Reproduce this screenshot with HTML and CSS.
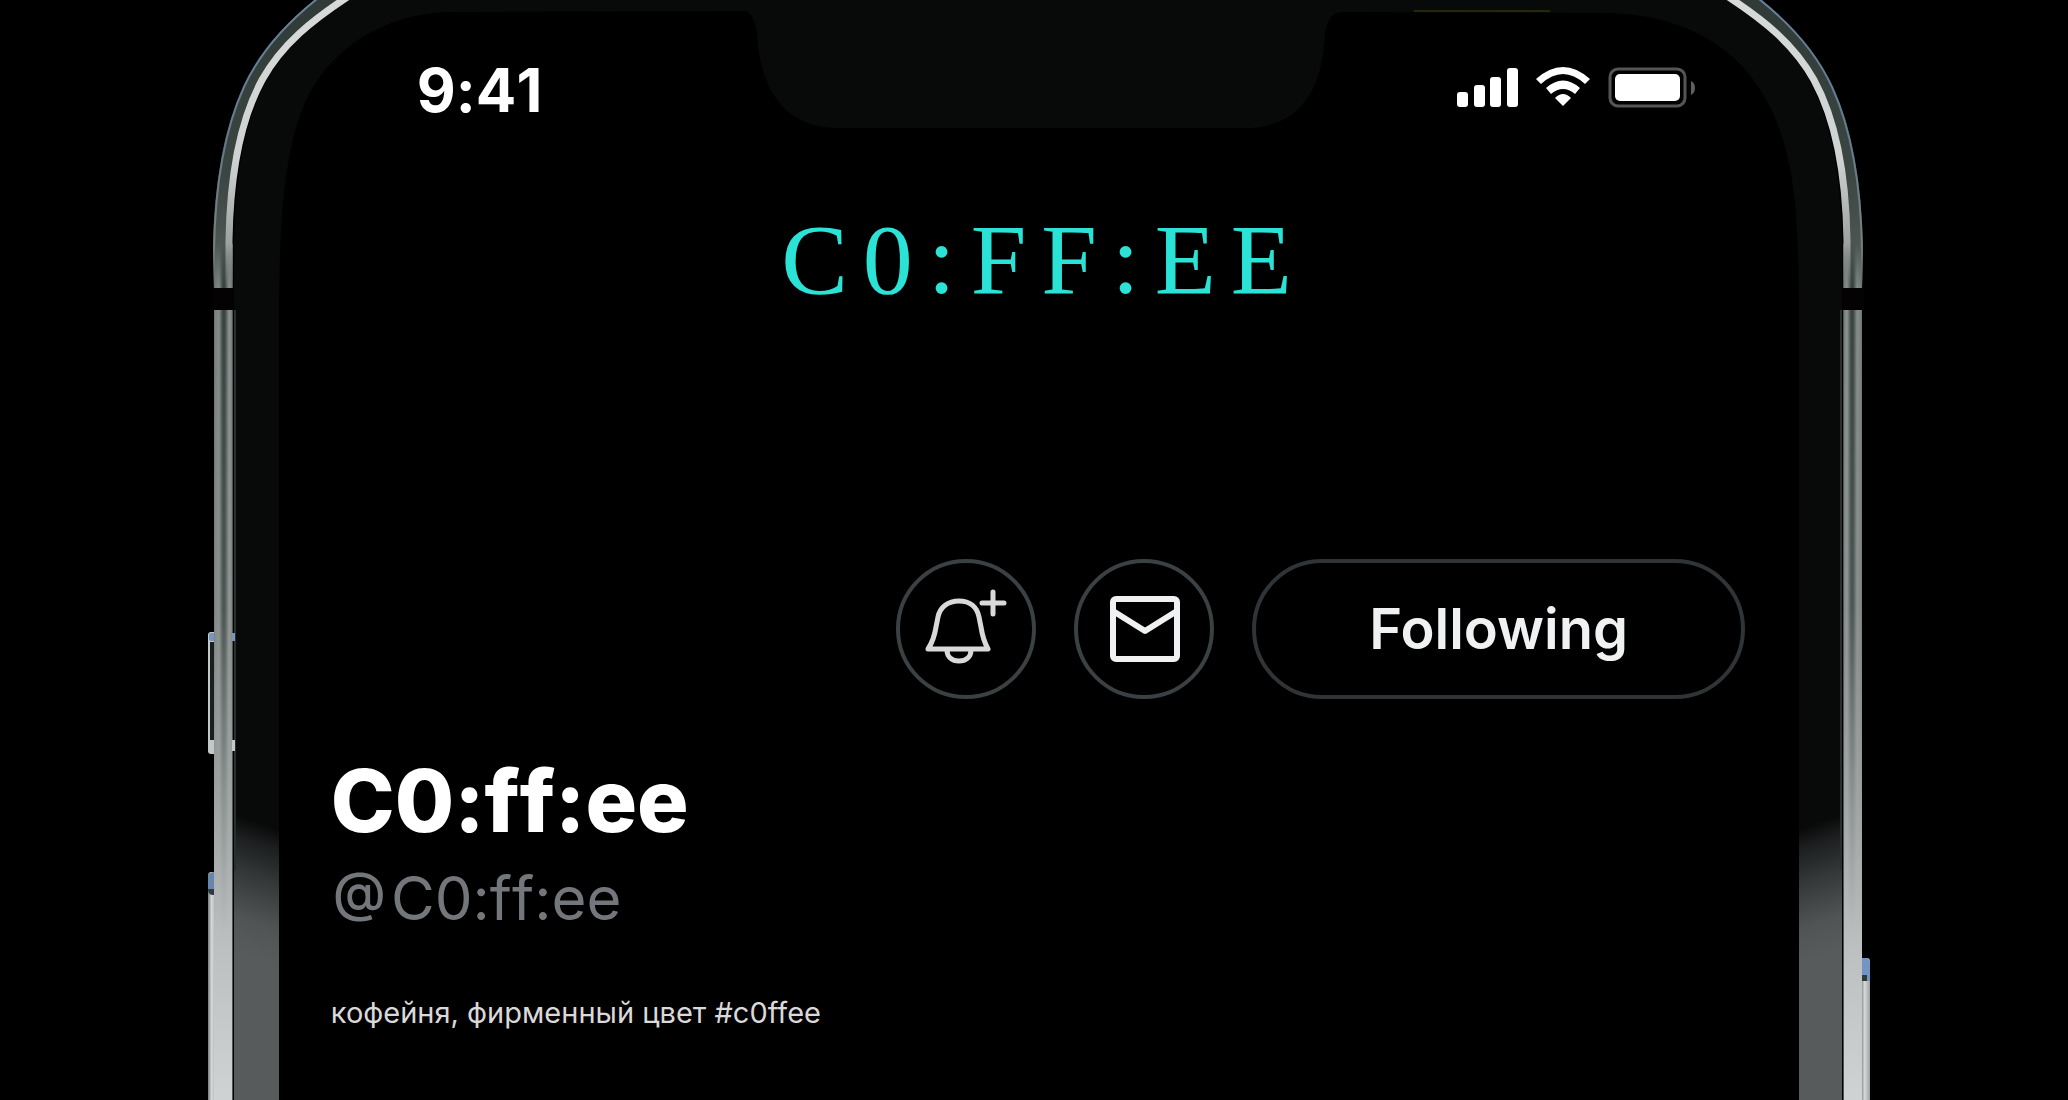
FILE: index.html
```html
<!DOCTYPE html>
<html lang="ru">
<head>
<meta charset="utf-8">
<title>C0:ff:ee</title>
<link rel="stylesheet" href="styles.css">
</head>
<body>
<div class="stage">
  <svg class="phone" viewBox="0 0 2068 1100" preserveAspectRatio="xMidYMin slice" aria-hidden="true">
    <defs>
      <linearGradient id="railSide" x1="213" y1="0" x2="233" y2="0" gradientUnits="userSpaceOnUse">
        <stop offset="0" stop-color="#4a514f"/><stop offset=".1" stop-color="#78807e"/><stop offset=".3" stop-color="#848c8a"/><stop offset=".5" stop-color="#363f3c"/><stop offset=".6" stop-color="#3b4441"/><stop offset=".8" stop-color="#8b9392"/><stop offset=".92" stop-color="#7c8483"/><stop offset="1" stop-color="#39403f"/>
      </linearGradient>
      <linearGradient id="railFade" x1="0" y1="280" x2="0" y2="1100" gradientUnits="userSpaceOnUse">
        <stop offset="0" stop-color="#a5a9a9" stop-opacity="0"/><stop offset=".4" stop-color="#a5a9a9" stop-opacity=".2"/><stop offset=".63" stop-color="#a9adad" stop-opacity=".75"/><stop offset=".8" stop-color="#babebe" stop-opacity="1"/><stop offset="1" stop-color="#d0d3d4"/>
      </linearGradient>
      <linearGradient id="railCurve" x1="0" y1="0" x2="0" y2="290" gradientUnits="userSpaceOnUse">
        <stop offset="0" stop-color="#303a36"/><stop offset=".6" stop-color="#3b4541"/><stop offset=".84" stop-color="#4c5552"/><stop offset="1" stop-color="#4c5552" stop-opacity="0"/>
      </linearGradient>
      <linearGradient id="shine" x1="0" y1="0" x2="0" y2="290" gradientUnits="userSpaceOnUse">
        <stop offset="0" stop-color="#d8dada"/><stop offset=".55" stop-color="#cfd2d2"/><stop offset=".84" stop-color="#9ba2a1"/><stop offset="1" stop-color="#8b9392" stop-opacity="0"/>
      </linearGradient>
      <linearGradient id="edge" x1="0" y1="0" x2="0" y2="290" gradientUnits="userSpaceOnUse">
        <stop offset="0" stop-color="#66809b"/><stop offset=".5" stop-color="#62798c"/><stop offset=".84" stop-color="#78807e"/><stop offset="1" stop-color="#78807e" stop-opacity="0"/>
      </linearGradient>
      <linearGradient id="bezel" x1="256" y1="822" x2="215" y2="942" gradientUnits="userSpaceOnUse">
        <stop offset="0" stop-color="#080a0a"/><stop offset=".15" stop-color="#1c1e1f"/><stop offset=".4" stop-color="#333738"/><stop offset=".75" stop-color="#505454"/><stop offset="1" stop-color="#575b5b"/>
      </linearGradient>
      <linearGradient id="key" x1="0" y1="0" x2="1" y2="0">
        <stop offset="0" stop-color="#767c7b"/><stop offset=".4" stop-color="#d8dada"/><stop offset="1" stop-color="#9da1a1"/>
      </linearGradient>
      <g id="half">
        <path fill="url(#bezel)" d="M234 1100V240C236 180 242 128 266 82C286 44 316 18 356 -6H1038V1100Z"/>
        <rect x="214" y="244" width="19" height="856" fill="url(#railSide)"/>
        <path fill="url(#railCurve)" d="M213 290V250C214 190 222 133 243 87C259 52 285 22 325 -8H352C308 20 284 46 266 78C240 124 233 180 232 240V290Z"/>
        <path fill="none" stroke="url(#edge)" stroke-width="2" d="M214 290V250C215 190 223 133 244 87C260 52 286 22 326 -8"/>
        <path fill="none" stroke="url(#shine)" stroke-width="7" d="M229 290V240C230 180 238 124 262 80C282 44 312 20 352 -6"/>
        <rect x="214" y="280" width="18" height="820" fill="url(#railFade)"/>
        <rect x="234" y="310" width="2" height="560" fill="#2a302f"/>
        <path fill="#050203" d="M212 288H233V310H212Z"/>
      </g>
    </defs>
    <rect x="208" y="632" width="9" height="122" rx="3" fill="#c5c8c8"/>
    <rect x="210" y="642" width="7" height="98" fill="#17201d"/>
    <rect x="209" y="633" width="8" height="8" rx="2" fill="#7896bd"/>
    <rect x="208" y="872" width="9" height="240" rx="3" fill="url(#key)"/>
    <path d="M208 892V878Q208 872 214 872V895Q208 895 208 892Z" fill="#6686ad"/>
    <path d="M208 889L214 889V895Q208 895 208 889Z" fill="#2f3b36"/>
    <rect x="1861" y="958" width="9" height="150" rx="3" fill="url(#key)"/>
    <path d="M1862 958H1866Q1870 958 1870 966V981H1862Z" fill="#7095c6"/>
    <path d="M1862 975H1867V981H1862Z" fill="#2f3b36"/>
    <use href="#half"/>
    <use href="#half" transform="translate(2076 0) scale(-1 1)"/>
    <path fill="#7896bd" d="M232 633H235V641H232Z"/>
    <path fill="#c5c8c8" d="M232 740H235V751H232Z"/>
    <path fill="#000" d="M279 1100V300C280 230 282 150 308 96C335 45 385 15 446 12L745 11Q754 13 757 34C760 90 785 127 836 128H1248C1297 126 1322 95 1325 34Q1328 13 1341 12L1610 13C1700 16 1755 60 1780 130C1797 180 1798 230 1799 300V1100Z"/>
    <path fill="#26280a" d="M1414 10H1550V12H1414Z"/>
  </svg>

  <main class="screen">
    <header class="status">
      <time class="clock">9:41</time>
      <svg class="signals" width="242" height="42" viewBox="0 0 242 42" role="img" aria-label="Signal, Wi-Fi, battery">
        <g fill="#fff">
          <rect x="1" y="25" width="11" height="15" rx="3"/><rect x="18" y="18" width="11" height="22" rx="3"/><rect x="34" y="10" width="11" height="30" rx="3"/><rect x="51" y="1" width="11" height="39" rx="3"/>
          <path d="M80 12Q107-12 134 12L129 17Q107-3 85 17ZM90 21Q107 6 124 21L119 27Q107 17 95 27ZM99 31Q107 23 115 31L107 39Z"/>
          <rect x="159" y="7" width="65" height="27" rx="5"/>
        </g>
        <rect x="154" y="2" width="75" height="37" rx="8" fill="none" stroke="#555" stroke-width="3"/>
        <path d="M235 14Q239 16 239 21T235 28Z" fill="#606060"/>
      </svg>
    </header>

    <p class="wordmark">C0:FF:EE</p>

    <div class="actions">
      <button class="round" type="button" aria-label="Notify">
        <svg width="84" height="84" viewBox="0 0 84 84" fill="none" stroke="#d9d9d9" stroke-width="5" stroke-linejoin="round" stroke-linecap="round"><path d="M4 62Q10 53 12 40L14 30C16 20 24 14 35 14S53 20 55 30L57 40Q59 53 64 62ZM23 63C23 70 28 74 35 74S47 70 47 63M69 5V27M58 16H80"/></svg>
      </button>
      <button class="round" type="button" aria-label="Message">
        <svg width="84" height="84" viewBox="0 0 84 84" fill="none" stroke="#eff1f3" stroke-width="6" stroke-linejoin="round"><rect x="11" y="12" width="64" height="60" rx="3"/><path d="M11 24L43 44L75 24"/></svg>
      </button>
      <button class="follow" type="button">Following</button>
    </div>

    <section class="profile">
      <h1 class="name">C0:ff:ee</h1>
      <p class="handle"><span class="at">@</span><span>C0:ff:ee</span></p>
      <p class="bio">кофейня, фирменный цвет #c0ffee</p>
    </section>
  </main>
</div>
</body>
</html>
```
FILE: styles.css
```css
* { box-sizing: border-box; }
body { margin: 0; background: #000; color: #fff; font-family: Inter, "Liberation Sans", sans-serif; font-variant-ligatures: none; font-kerning: none; }
h1, p { margin: 0; }
.stage { position: relative; min-height: 100vh; overflow: hidden; }
.phone { position: absolute; top: 0; left: 0; width: 100%; height: 100%; }
.screen { position: relative; width: 74%; margin: 0 auto; padding: 0 54px 40px 62px; }
.status { display: flex; justify-content: space-between; padding: 54px 47px 0 86px; }
.clock { font-size: 60px; line-height: 72px; font-weight: 700; }
.signals { margin-top: 13px; }
.wordmark { margin-top: 82px; padding-left: 12px; text-align: center; color: #2be2d6; font-family: "Liberation Serif", serif; font-size: 100px; line-height: 104px; letter-spacing: 15px; }
.actions { display: flex; justify-content: flex-end; gap: 38px; margin-top: 247px; }
.round, .follow { display: flex; align-items: center; justify-content: center; height: 140px; padding: 0; border: 4px solid #303437; border-radius: 70px; background: none; color: #eff1f3; font: 600 56px/64px Inter, "Liberation Sans", sans-serif; }
.round { width: 140px; border-color: #3b4043; }
.follow { width: 493px; }
.profile { padding-top: 50px; }
.name { font-size: 86px; line-height: 104px; font-weight: 800; }
.handle { display: flex; gap: 5px; margin-top: 5px; padding-left: 2px; color: #73767b; font-size: 60px; line-height: 80px; }
.at { font-size: 54px; line-height: 68px; font-weight: 500; }
.bio { margin-top: 55px; color: #d9d9d9; font-size: 29px; line-height: 40px; font-kerning: normal; }
```
